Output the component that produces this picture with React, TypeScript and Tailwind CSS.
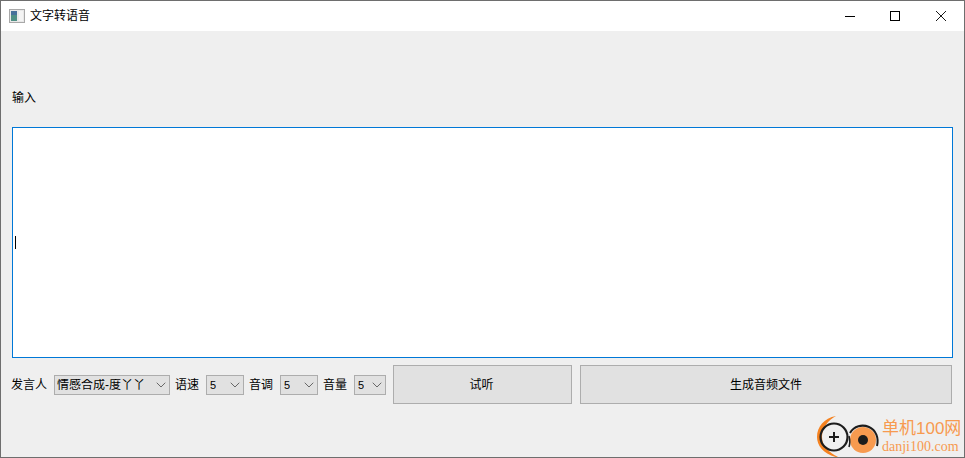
import { ChevronDown } from 'lucide-react';

const CJK = "font-['Liberation_Sans','Noto_Sans_CJK_SC',sans-serif]";

function Combo({ value, width, small }: { value: string; width: string; small?: boolean }) {
  return (
    <div className={`${width} h-[20px] shrink-0 flex items-center justify-between bg-[#e1e1e1] border border-[#adadad] text-black ${small ? 'pl-[3px] text-[11px]' : 'pl-[2px] text-[12px]'}`}>
      <span className="mt-[1px] leading-none whitespace-nowrap overflow-hidden">{value}</span>
      <ChevronDown className="w-[16px] h-[16px] shrink-0 text-[#555555]" strokeWidth={1.3} />
    </div>
  );
}

function Label({ children, className }: { children: string; className: string }) {
  return <span className={`${className} mt-[1px] shrink-0 text-[12px] leading-none text-black whitespace-nowrap`}>{children}</span>;
}

export default function App() {
  return (
    <div className={`${CJK} relative w-[965px] h-[458px] overflow-hidden flex flex-col bg-[#efefef] border border-[#6e6e6e]`}>
      {/* 标题栏 */}
      <div className="h-[30px] shrink-0 bg-white flex items-center pl-[8px]">
        <svg width="16" height="14" viewBox="0 0 16 14" className="shrink-0">
          <rect x="0.5" y="0.5" width="15" height="13" fill="#e8e8e8" stroke="#a8a8a8" />
          <rect x="2" y="2" width="6" height="10" fill="#4f8f84" />
          <rect x="2" y="2" width="6" height="4" fill="#46709a" />
          <rect x="10" y="2" width="4" height="10" fill="#f4f4f4" />
        </svg>
        <span className="ml-[5px] text-[12px] leading-none text-black">文字转语音</span>
        <div className="ml-auto flex items-center h-full">
          <div className="w-[44px] h-full flex items-center justify-center">
            <svg width="10" height="10" viewBox="0 0 10 10"><path d="M0 5.5H10" stroke="#000" fill="none" /></svg>
          </div>
          <div className="w-[46px] h-full flex items-center justify-center">
            <svg width="10" height="10" viewBox="0 0 10 10"><rect x="0.5" y="0.5" width="9" height="9" stroke="#000" fill="none" /></svg>
          </div>
          <div className="w-[46px] h-full flex items-center justify-center">
            <svg width="10" height="10" viewBox="0 0 10 10"><path d="M0 0L10 10M10 0L0 10" stroke="#000" fill="none" strokeWidth="0.9" /></svg>
          </div>
        </div>
      </div>

      {/* 内容 */}
      <div className="flex-1 flex flex-col pl-[11px] pr-[11px]">
        <div className="h-[96px] shrink-0 flex items-center">
          <span className="text-[12px] leading-none text-black mt-[38px]">输入</span>
        </div>
        <div className="h-[231px] shrink-0 bg-white border border-[#0078d7] flex items-center pl-[2px]">
          <div className="w-px h-[13px] bg-black" />
        </div>
        <div className="mt-[7px] h-[39px] shrink-0 flex items-center">
          <Label className="w-[42px] -ml-[1px] mr-[1px]">发言人</Label>
          <Combo value="情感合成-度丫丫" width="w-[116px]" />
          <Label className="ml-[5px] w-[31px]">语速</Label>
          <Combo value="5" width="w-[38px]" small />
          <Label className="ml-[5px] w-[31px]">音调</Label>
          <Combo value="5" width="w-[38px]" small />
          <Label className="ml-[5px] w-[31px]">音量</Label>
          <Combo value="5" width="w-[32px]" small />
          <button className="ml-[7px] w-[179px] h-full shrink-0 bg-[#e1e1e1] border border-[#adadad] pr-[2px] text-[12px] text-black">试听</button>
          <button className="ml-[8px] w-[372px] h-full shrink-0 bg-[#e1e1e1] border border-[#adadad] text-[12px] text-black">生成音频文件</button>
        </div>
      </div>

      {/* 水印 */}
      <div className="absolute left-[815px] top-[413px] flex items-start">
        <svg width="65" height="44" viewBox="0 0 65 44" className="shrink-0">
          <path d="M20 2C8 4 1 13 1 23C1 32 8 41 24 44C14 39 6 33 6 23C6 14 12 6 20 2Z" fill="#f58220" />
          <circle cx="18" cy="23" r="13.5" fill="none" stroke="#1c1c1c" strokeWidth="2.2" />
          <path d="M13 23H23M18 18V28" stroke="#1c1c1c" strokeWidth="2" />
          <circle cx="47" cy="26" r="13" fill="#f79a4f" />
          <path d="M34 19C38 12 46 10 53 13C60 16 63 24 61 32" fill="none" stroke="#1c1c1c" strokeWidth="2" />
          <path d="M33 22C34 26 34 30 33 33" fill="none" stroke="#1c1c1c" strokeWidth="1.5" />
          <circle cx="47" cy="26" r="5" fill="#1c1c1c" />
        </svg>
        <div className="flex flex-col ml-[1px] pt-[4px] text-[#f79a4f]">
          <span className="text-[17px] leading-[21px] whitespace-nowrap">单机100网</span>
          <span className="font-['Liberation_Serif',serif] text-[14px] leading-[16px] whitespace-nowrap">danji100.com</span>
        </div>
      </div>
    </div>
  );
}
